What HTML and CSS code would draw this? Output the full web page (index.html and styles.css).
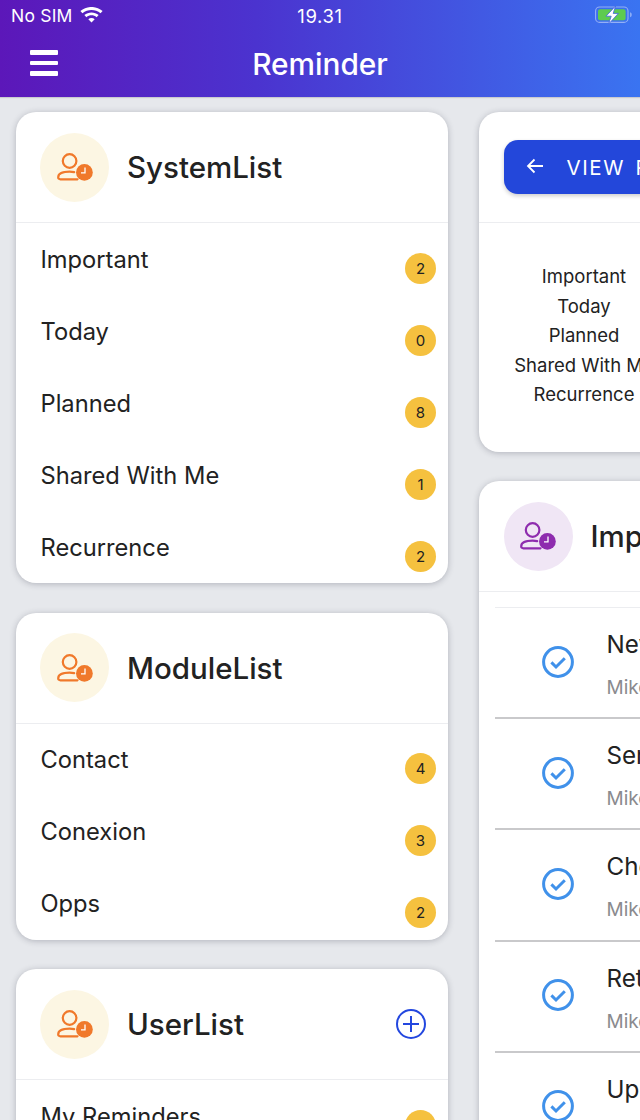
FILE: index.html
```html
<!DOCTYPE html>
<html lang="en">
<head>
<meta charset="utf-8">
<title>Reminder</title>
<link rel="stylesheet" href="styles.css">
</head>
<body>
<svg class="defs" width="0" height="0" aria-hidden="true">
  <symbol id="person-clock" viewBox="0 0 36 28">
    <circle cx="12.600" cy="8" r="6.800" fill="none" stroke="currentColor" stroke-width="2.200"/>
    <path d="M20.500 26.300H3.400C2 26.300 1.200 25.500 1.200 24.400C1.200 20.800 5.600 18.700 12.600 18.700C14.200 18.700 15.700 18.800 17.200 19.100" fill="none" stroke="currentColor" stroke-width="2.200" stroke-linecap="round"/>
    <circle cx="27.400" cy="19.400" r="8.400" fill="currentColor"/>
    <path d="M28 14.600V19.800H24" fill="none" stroke="#fff" stroke-width="1.300"/>
  </symbol>
  <symbol id="check" viewBox="0 0 32 32">
    <circle cx="16" cy="16" r="14.400" fill="none" stroke="currentColor" stroke-width="3"/>
    <path d="M9.400 16.400L14 21L22.800 12.200" fill="none" stroke="currentColor" stroke-width="3"/>
  </symbol>
</svg>
<header class="top">
  <div class="status">
    <div class="carrier">
      <span>No SIM</span>
      <svg class="wifi" viewBox="0 0 24 17" aria-hidden="true"><path d="M12 16.600L8.600 13C10.600 11.200 13.400 11.200 15.400 13ZM6.600 10.900L4.400 8.600C8.700 4.900 15.300 4.900 19.600 8.600L17.400 10.900C14.300 8.200 9.700 8.200 6.600 10.900ZM2.400 6.600L.2 4.300C7 -1.500 17 -1.500 23.800 4.300L21.600 6.600C16 1.900 8 1.900 2.400 6.600Z" fill="#fff"/></svg>
    </div>
    <span class="time">19.31</span>
    <svg class="battery" viewBox="0 0 38 18" aria-hidden="true">
      <rect x=".6" y="1" width="32.400" height="15.400" rx="4" fill="none" stroke="#fff" stroke-opacity=".45" stroke-width="1.100"/>
      <rect x="3" y="3.200" width="27.600" height="11" rx="2" fill="#5ecb4f"/>
      <path d="M35.200 6.200C36.400 6.600 36.600 7.600 36.600 8.700S36.400 10.800 35.200 11.200Z" fill="#fff" fill-opacity=".5"/>
      <path d="M20.600 0L11 10.200H16.200L13.600 18L23.400 7.400H18.200Z" fill="#fff" stroke="#3f63e0" stroke-width=".8"/>
    </svg>
  </div>
  <div class="bar">
    <div class="burger"><i></i><i></i><i></i></div>
    <h1>Reminder</h1>
  </div>
</header>
<main class="board">
  <div class="col">
    <section class="card">
      <div class="card-head">
        <div class="avatar avatar-orange"><svg class="avatar-icon"><use href="#person-clock"/></svg></div>
        <h2>SystemList</h2>
      </div>
      <div class="row"><span>Important</span><b class="badge">2</b></div>
      <div class="row"><span>Today</span><b class="badge">0</b></div>
      <div class="row"><span>Planned</span><b class="badge">8</b></div>
      <div class="row"><span>Shared With Me</span><b class="badge">1</b></div>
      <div class="row"><span>Recurrence</span><b class="badge">2</b></div>
    </section>
    <section class="card">
      <div class="card-head">
        <div class="avatar avatar-orange"><svg class="avatar-icon"><use href="#person-clock"/></svg></div>
        <h2>ModuleList</h2>
      </div>
      <div class="row"><span>Contact</span><b class="badge">4</b></div>
      <div class="row"><span>Conexion</span><b class="badge">3</b></div>
      <div class="row"><span>Opps</span><b class="badge">2</b></div>
    </section>
    <section class="card">
      <div class="card-head">
        <div class="avatar avatar-orange"><svg class="avatar-icon"><use href="#person-clock"/></svg></div>
        <h2>UserList</h2>
        <svg class="add" viewBox="0 0 30 30" aria-hidden="true"><circle cx="15" cy="15" r="14" fill="none" stroke="currentColor" stroke-width="2"/><path d="M15 7V23M7 15H23" stroke="currentColor" stroke-width="2"/></svg>
      </div>
      <div class="row"><span>My Reminders</span><b class="badge">1</b></div>
    </section>
  </div>
  <div class="col">
    <section class="card">
      <div class="card-head">
        <button class="back" type="button">
          <svg class="arrow" viewBox="0 0 18 16" aria-hidden="true"><path d="M17 8H2M8.500 1.500L2 8L8.500 14.500" fill="none" stroke="#fff" stroke-width="1.800"/></svg>
          <span>VIEW REMINDERS</span>
        </button>
      </div>
      <div class="links">
        <span>Important</span>
        <span>Today</span>
        <span>Planned</span>
        <span>Shared With Me</span>
        <span>Recurrence</span>
      </div>
    </section>
    <section class="card">
      <div class="card-head">
        <div class="avatar avatar-purple"><svg class="avatar-icon"><use href="#person-clock"/></svg></div>
        <h2>Important</h2>
      </div>
      <ul class="tasks">
        <li class="task"><svg class="check"><use href="#check"/></svg><div class="task-text"><p class="task-title">New reminder</p><p class="task-sub">Mike Johnson</p></div></li>
        <li class="task"><svg class="check"><use href="#check"/></svg><div class="task-text"><p class="task-title">Send report</p><p class="task-sub">Mike Johnson</p></div></li>
        <li class="task"><svg class="check"><use href="#check"/></svg><div class="task-text"><p class="task-title">Check mail</p><p class="task-sub">Mike Johnson</p></div></li>
        <li class="task"><svg class="check"><use href="#check"/></svg><div class="task-text"><p class="task-title">Return call</p><p class="task-sub">Mike Johnson</p></div></li>
        <li class="task"><svg class="check"><use href="#check"/></svg><div class="task-text"><p class="task-title">Update list</p><p class="task-sub">Mike Johnson</p></div></li>
      </ul>
    </section>
  </div>
</main>
</body>
</html>
```

FILE: styles.css
```css
* { box-sizing: border-box; }
html, body { margin: 0; padding: 0; height: 1120px; overflow: hidden; }
body { width: 640px; background: #e6e8ec; font-family: Inter, "Liberation Sans", sans-serif; color: #222; }
.defs { position: absolute; }

.top { height: 97px; background: linear-gradient(90deg, #5c17b9 0%, #4b33cf 40%, #3a74f1 100%); color: #fff; box-shadow: 0 1px 1px rgba(0,0,0,.12); }
.status { height: 31px; padding: 0 11px; display: grid; grid-template-columns: 1fr auto 1fr; align-items: center; }
.carrier { display: flex; align-items: center; gap: 7px; font-size: 17.500px; letter-spacing: .2px; }
.wifi { width: 23px; height: 16px; margin-top: -2px; }
.time { font-size: 18.500px; letter-spacing: .6px; }
.battery { width: 38px; height: 18px; justify-self: end; margin: -1px -4px 0 0; }
.bar { height: 66px; padding: 0 30px; display: flex; align-items: center; position: relative; }
.burger { width: 28px; display: flex; flex-direction: column; gap: 6px; margin-top: -2px; }
.burger i { display: block; height: 4.500px; background: #fff; border-radius: 1px; }
.bar h1 { position: absolute; left: 0; right: 0; margin: 0; text-align: center; font-size: 29.800px; font-weight: 500; }

.board { display: flex; gap: 31px; padding: 15px 0 0 15.500px; width: 1000px; }
.col { width: 432.500px; display: flex; flex-direction: column; gap: 29.600px; }
.card { background: #fff; border-radius: 20px; box-shadow: 0 1px 6px rgba(40,44,60,.28); overflow: hidden; }
.card-head { height: 111px; display: flex; align-items: center; padding: 0 24.500px; border-bottom: 1px solid #ecedf0; }
.card-head h2 { margin: 0 0 0 18px; font-size: 29.500px; font-weight: 500; flex: 1; white-space: nowrap; color: #222; }
.avatar { width: 69px; height: 69px; border-radius: 50%; display: flex; align-items: center; justify-content: center; flex: none; }
.avatar-orange { background: #fcf6e3; color: #f0792b; }
.avatar-purple { background: #f0e6f5; color: #8e2cae; }
.avatar-icon { width: 36px; height: 28px; }
.add { width: 30px; height: 30px; color: #2347df; margin-right: -2px; }

.row { height: 72px; display: flex; align-items: center; justify-content: space-between; padding: 0 12px 0 25px; font-size: 23.700px; color: #222; }
.badge { width: 31px; height: 31px; border-radius: 50%; background: #f5c13f; display: flex; align-items: center; justify-content: center; font-size: 15px; font-weight: 400; margin-top: 18px; color: #222; }

.back { width: 300px; height: 54px; border: 0; border-radius: 14px; background: #2347da; color: #fff; display: flex; align-items: center; gap: 23px; padding: 0 23px; font: 400 20.500px Inter, "Liberation Sans", sans-serif; letter-spacing: 1.600px; word-spacing: 3px; white-space: nowrap; box-shadow: 0 2px 4px rgba(0,0,0,.2); }
.arrow { width: 18px; height: 16px; flex: none; margin-top: -3px; margin-left: -1px; }
.links { height: 228.900px; padding-top: 39px; display: flex; flex-direction: column; align-items: flex-start; width: 210px; font-size: 18.500px; }
.links span { height: 29.500px; line-height: 29.500px; width: 100%; text-align: center; white-space: nowrap; color: #222; }

.tasks { list-style: none; margin: 14.500px 0 0 16px; padding: 0; border-top: 1px solid #ecedf0; }
.task { height: 111.200px; display: flex; align-items: center; padding-left: 46.500px; border-bottom: 2px solid #c9c9cb; gap: 33px; }
.check { width: 32px; height: 32px; color: #4091ea; flex: none; margin-top: -2px; }
.task-text { margin-top: 4px; }
.task p { margin: 0; white-space: nowrap; }
.task .task-title { font-size: 24.200px; color: #222; margin-bottom: 17px; }
.task-sub { font-size: 19px; color: #8a8a8e; }
```
